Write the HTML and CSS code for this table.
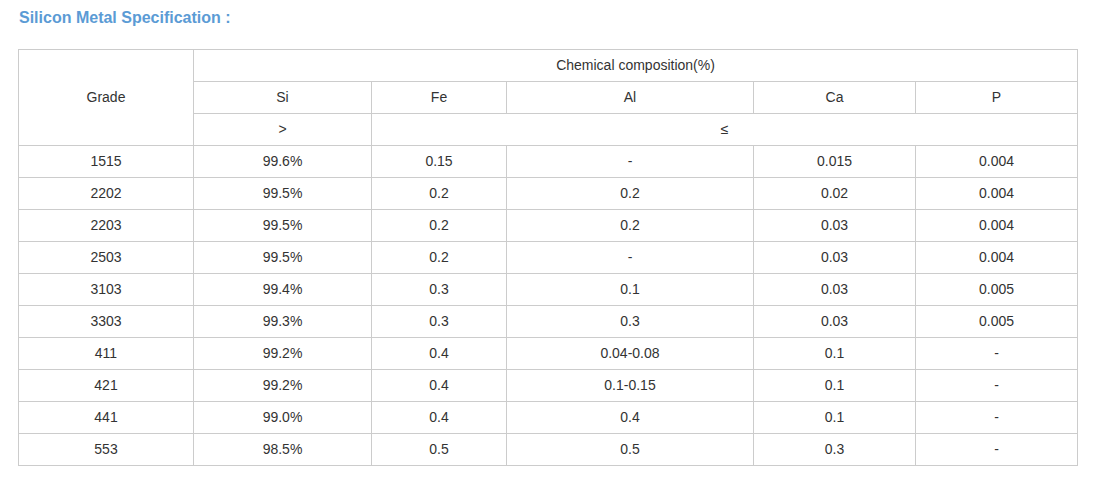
FILE: index.html
```html
<!DOCTYPE html>
<html>
<head>
<meta charset="utf-8">
<link rel="stylesheet" href="styles.css">
</head>
<body>
<div class="page">
  <h2 class="title">Silicon Metal Specification :</h2>
  <table class="spec">
    <colgroup>
      <col class="c1"><col class="c2"><col class="c3"><col class="c4"><col class="c5"><col class="c6">
    </colgroup>
    <tr><td rowspan="3">Grade</td><td colspan="5">Chemical composition(%)</td></tr>
    <tr><td>Si</td><td>Fe</td><td>Al</td><td>Ca</td><td>P</td></tr>
    <tr><td>&gt;</td><td colspan="4">≤</td></tr>
    <tr><td>1515</td><td>99.6%</td><td>0.15</td><td>-</td><td>0.015</td><td>0.004</td></tr>
    <tr><td>2202</td><td>99.5%</td><td>0.2</td><td>0.2</td><td>0.02</td><td>0.004</td></tr>
    <tr><td>2203</td><td>99.5%</td><td>0.2</td><td>0.2</td><td>0.03</td><td>0.004</td></tr>
    <tr><td>2503</td><td>99.5%</td><td>0.2</td><td>-</td><td>0.03</td><td>0.004</td></tr>
    <tr><td>3103</td><td>99.4%</td><td>0.3</td><td>0.1</td><td>0.03</td><td>0.005</td></tr>
    <tr><td>3303</td><td>99.3%</td><td>0.3</td><td>0.3</td><td>0.03</td><td>0.005</td></tr>
    <tr><td>411</td><td>99.2%</td><td>0.4</td><td>0.04-0.08</td><td>0.1</td><td>-</td></tr>
    <tr><td>421</td><td>99.2%</td><td>0.4</td><td>0.1-0.15</td><td>0.1</td><td>-</td></tr>
    <tr><td>441</td><td>99.0%</td><td>0.4</td><td>0.4</td><td>0.1</td><td>-</td></tr>
    <tr><td>553</td><td>98.5%</td><td>0.5</td><td>0.5</td><td>0.3</td><td>-</td></tr>
  </table>
</div>
</body>
</html>
```
FILE: styles.css
```css
html, body {
  margin: 0;
  padding: 0;
  background: #fff;
}
.page {
  padding: 0 0 0 18px;
  font-family: "Liberation Sans", Arial, sans-serif;
}
.title {
  margin: 0;
  padding: 8px 0 0 1px;
  height: 49px;
  box-sizing: border-box;
  font-size: 16px;
  line-height: 20px;
  font-weight: bold;
  color: #5b9bd5;
}
.spec {
  border-collapse: collapse;
  table-layout: fixed;
  width: 1059px;
  color: #333;
  font-size: 14px;
}
.spec td {
  border: 1px solid #ccc;
  height: 30px;
  padding: 0 0 1px;
  text-align: center;
  vertical-align: middle;
  line-height: 16px;
}
.c1 { width: 175px; }
.c2 { width: 178px; }
.c3 { width: 135px; }
.c4 { width: 247px; }
.c5 { width: 162px; }
.c6 { width: 162px; }
```
